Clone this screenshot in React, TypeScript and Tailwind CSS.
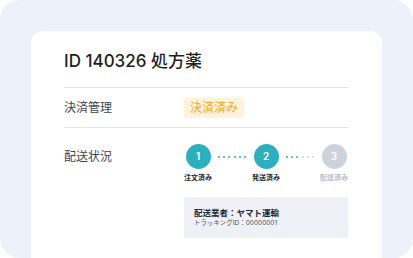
import React from 'react'

const font = { fontFamily: 'Inter, "Noto Sans CJK JP", "Noto Sans", sans-serif' }

const steps = [
  { n: 1, label: '注文済み', done: true },
  { n: 2, label: '発送済み', done: true },
  { n: 3, label: '配達済み', done: false },
]

function Dots({ lit }: { lit: number }) {
  return (
    <div className="flex h-[25px] w-[40px] items-center justify-between px-[6px]">
      {Array.from({ length: 6 }).map((_, i) => (
        <span
          key={i}
          className={`block h-[2px] w-[2px] rounded-full ${i < lit ? 'bg-[#2eafbe]' : 'bg-[#cdd2dc]'}`}
        />
      ))}
    </div>
  )
}

function Step({ n, label, done }: { n: number; label: string; done: boolean }) {
  return (
    <div className="flex w-[28px] flex-col items-center">
      <div
        className={`flex h-[25px] w-[25px] shrink-0 items-center justify-center rounded-full text-[10px] font-semibold text-white ${
          done ? 'bg-[#2eafbe]' : 'bg-[#cdd2dc]'
        }`}
      >
        {n}
      </div>
      <div
        className={`mt-[4px] whitespace-nowrap text-[7px] font-bold leading-[10px] ${
          done ? 'text-[#1f2937]' : 'text-[#b8bdc7]'
        }`}
      >
        {label}
      </div>
    </div>
  )
}

export default function App() {
  return (
    <div className="bg-white" style={font}>
      <div className="h-[258px] w-[413px] overflow-hidden rounded-[20px] bg-[#edf1f9] px-[31px] pt-[31px]">
        <div className="h-[240px] rounded-[12px] bg-white px-[33px] pt-[18px]">
          <h1 className="text-[17px] font-medium leading-[24px] text-[#1e1e1e]">ID 140326 処方薬</h1>
          <div className="mt-[14px] border-t border-[#e3e6ee]" />
          <div className="flex h-[39px] items-center">
            <div className="w-[120px] text-[12px] text-[#3a4656]">決済管理</div>
            <span className="rounded-[3px] bg-[#fff3dc] px-[6px] py-[2px] text-[12px] leading-[16px] text-[#f5a623]">
              決済済み
            </span>
          </div>
          <div className="border-t border-[#e3e6ee]" />
          <div className="flex pt-[16px]">
            <div className="w-[120px] pt-[5px] text-[12px] leading-[16px] text-[#3a4656]">配送状況</div>
            <div className="flex flex-col">
              <div className="flex items-start">
                <Step {...steps[0]} />
                <Dots lit={6} />
                <Step {...steps[1]} />
                <Dots lit={3} />
                <Step {...steps[2]} />
              </div>
              <div className="mt-[14px] flex h-[41px] w-[164px] flex-col justify-center bg-[#eff1f6] px-[10px]">
                <div className="whitespace-nowrap text-[8.5px] font-bold leading-[11px] text-[#1f2a3a]">
                  配送業者：ヤマト運輸
                </div>
                <div className="whitespace-nowrap text-[6.5px] leading-[9px] text-[#4b5563]">
                  トラッキングID：00000001
                </div>
              </div>
            </div>
          </div>
        </div>
      </div>
    </div>
  )
}
